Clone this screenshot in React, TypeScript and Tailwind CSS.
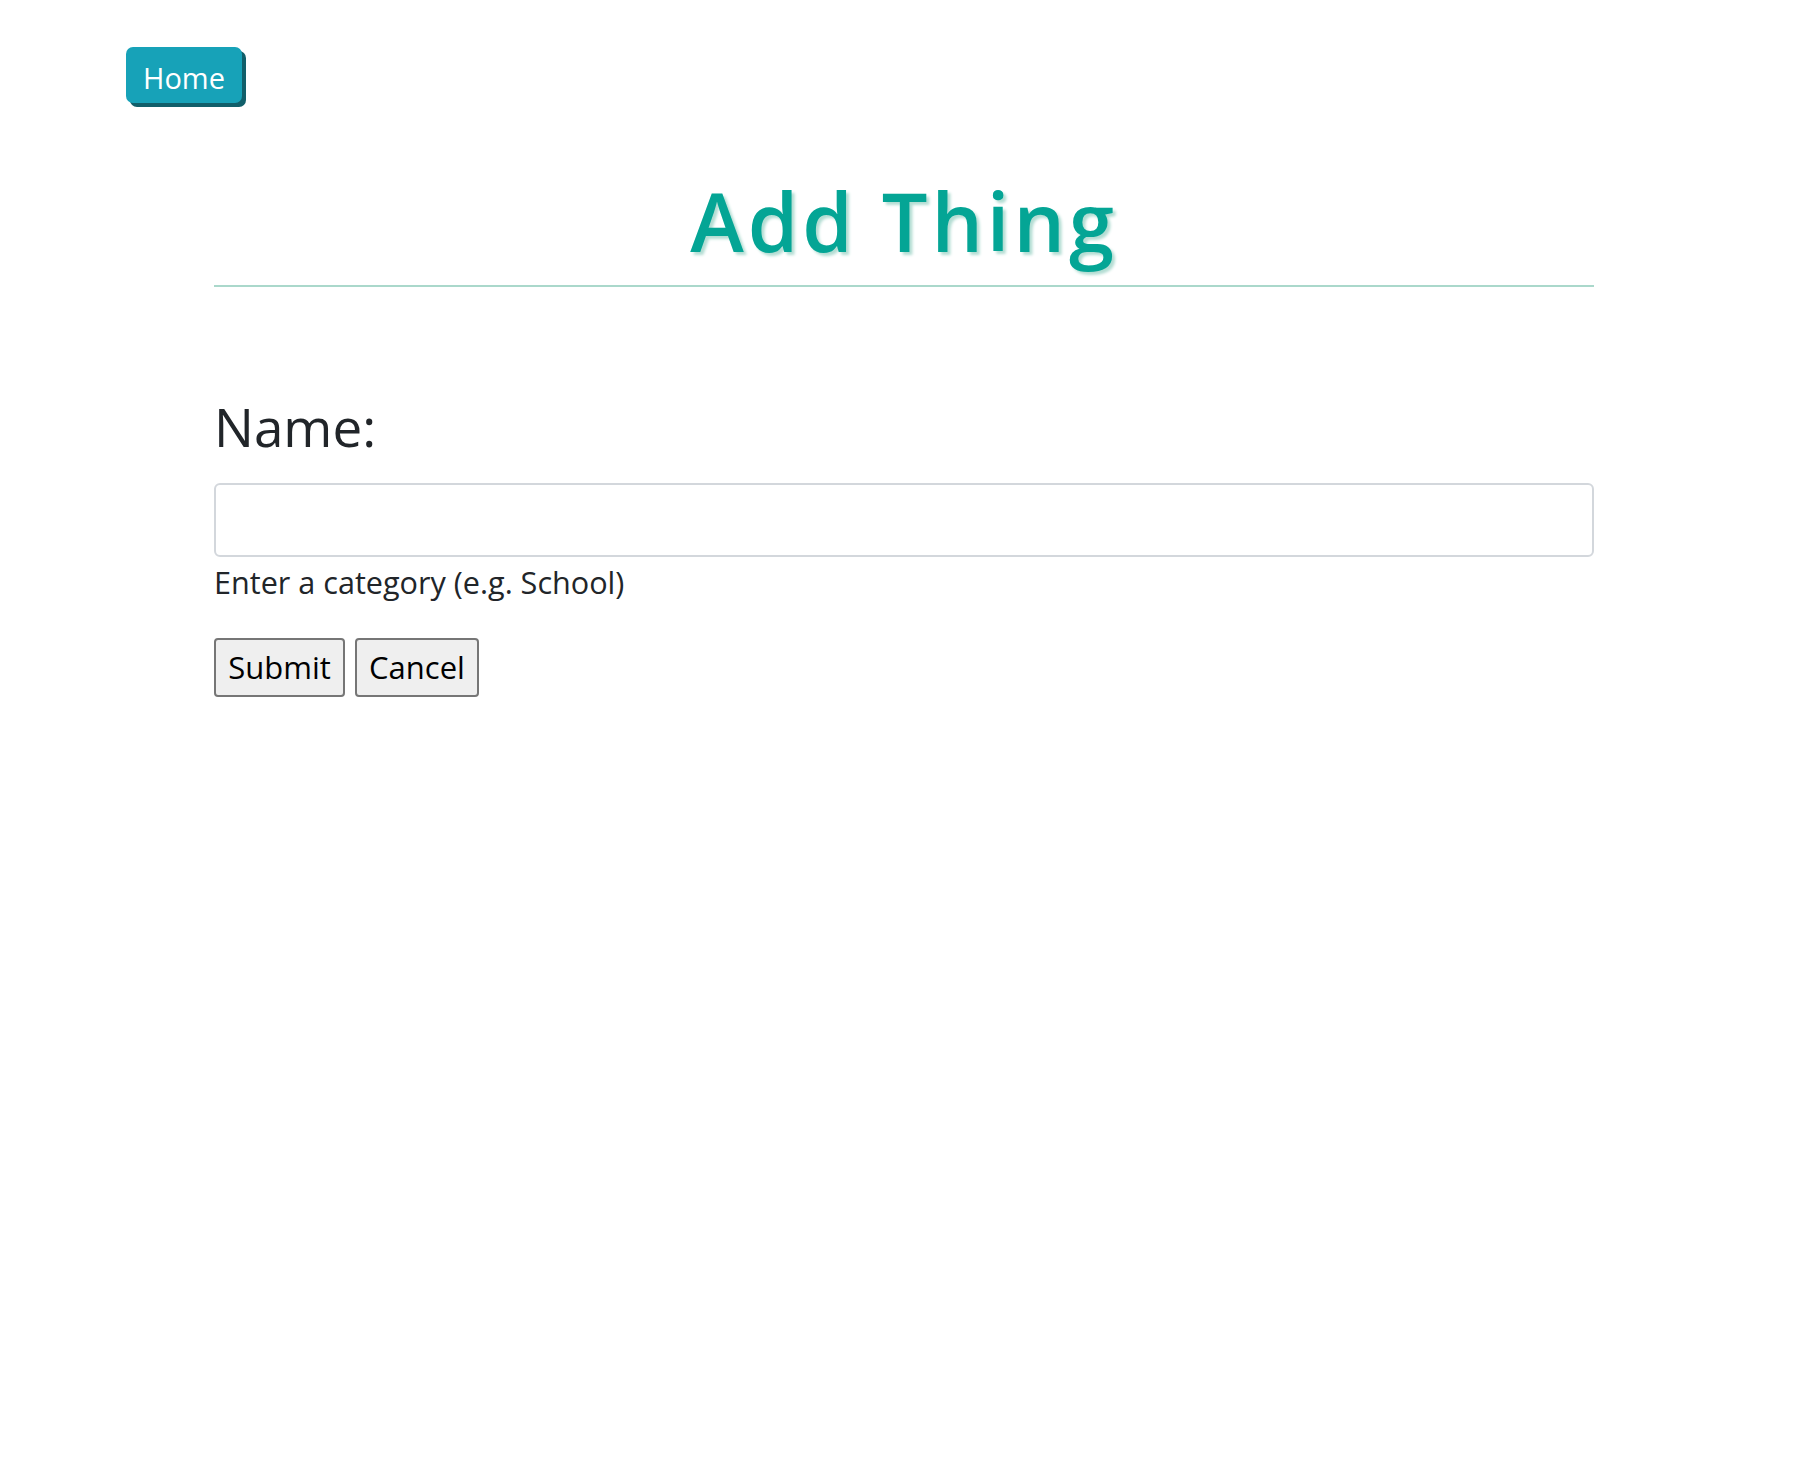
import React from "react";

export default function App() {
  return (
    <div
      className="min-h-[1478px] w-full bg-white text-[#212529]"
      style={{ fontFamily: '"Open Sans", "Noto Sans", sans-serif' }}
    >
      <div className="pl-[126px] pt-[47px]">
        <button className="flex h-[56px] items-center rounded-[7px] bg-[#17a2b8] px-[17px] pt-[5px] text-[29px] text-white shadow-[4px_4px_0_#115f6a]">
          Home
        </button>
      </div>
      <div className="mx-auto w-[1380px]">
        <h1 className="mt-[68px] pb-[14px] text-center text-[81px] font-semibold leading-[100px] tracking-[4px] text-[#04a595] [text-shadow:3px_3px_3px_#b3ddd3]">
          Add Thing
        </h1>
        <div className="h-[2px] w-full bg-[#aad8cb]" />
        <form className="mt-[106px]" onSubmit={(e) => e.preventDefault()}>
          <label className="block text-[53px] leading-[67px] text-[#212529]">Name:</label>
          <input
            type="text"
            className="mt-[23px] block h-[74px] w-full rounded-[6px] border-2 border-[#d3d7dc] px-4 text-[30px] outline-none"
          />
          <div className="mt-[3px] text-[30.6px] leading-[45px] text-[#212529]">
            Enter a category (e.g. School)
          </div>
          <div className="mt-[33px] flex gap-[10px]">
            <button
              type="submit"
              className="flex h-[59px] w-[131px] items-center justify-center rounded-[4px] border-2 border-[#767676] bg-[#efefef] text-[31px] text-black"
            >
              Submit
            </button>
            <button
              type="button"
              className="flex h-[59px] w-[124px] items-center justify-center rounded-[4px] border-2 border-[#767676] bg-[#efefef] text-[31px] text-black"
            >
              Cancel
            </button>
          </div>
        </form>
      </div>
    </div>
  );
}
